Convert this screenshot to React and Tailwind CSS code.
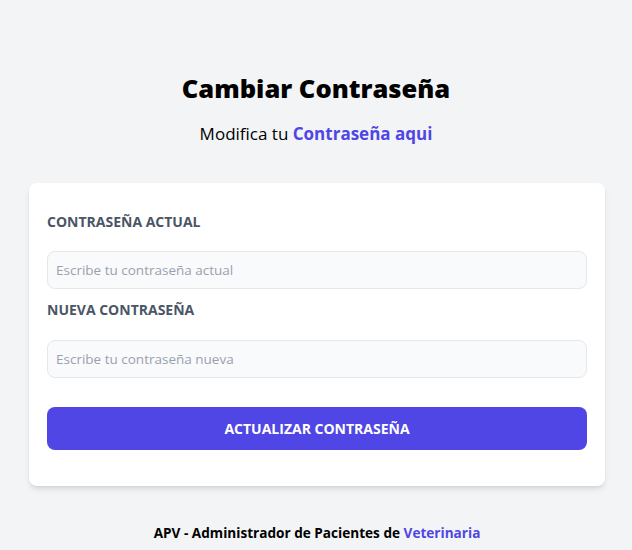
export default function App() {
  return (
    <div className="min-h-[550px] bg-gray-100 flex flex-col items-center" style={{ fontFamily: '"Open Sans", "Noto Sans", sans-serif' }}>
      <h1 className="mt-[72px] text-[25.5px] leading-8 font-extrabold text-black">Cambiar Contraseña</h1>
      <p className="mt-4 text-[17px] leading-7 text-black">
        Modifica tu <span className="font-bold text-[#4f46e5]">Contraseña aqui</span>
      </p>
      <div className="mt-[35px] ml-[2px] w-[576px] bg-white rounded-lg shadow-md px-[18px] pt-[29px] pb-[36px]">
        <label className="block text-[14px] leading-5 font-bold uppercase text-gray-600">Contraseña actual</label>
        <input
          type="password"
          placeholder="Escribe tu contraseña actual"
          className="mt-[19px] block w-full h-[38px] px-2 rounded-lg border border-gray-200 bg-gray-50 text-[13.5px] placeholder-gray-400 outline-none"
        />
        <label className="mt-[11px] block text-[14px] leading-5 font-bold uppercase text-gray-600">Nueva contraseña</label>
        <input
          type="password"
          placeholder="Escribe tu contraseña nueva"
          className="mt-[20px] block w-full h-[38px] px-2 rounded-lg border border-gray-200 bg-gray-50 text-[13.5px] placeholder-gray-400 outline-none"
        />
        <button className="mt-[29px] block w-full h-[43px] rounded-lg bg-[#4f46e5] text-white font-bold uppercase text-[14px]">
          Actualizar contraseña
        </button>
      </div>
      <p className="mt-[37px] ml-[2px] text-[13.6px] leading-5 font-bold text-black">
        APV - Administrador de Pacientes de <span className="text-[#4f46e5]">Veterinaria</span>
      </p>
    </div>
  );
}
